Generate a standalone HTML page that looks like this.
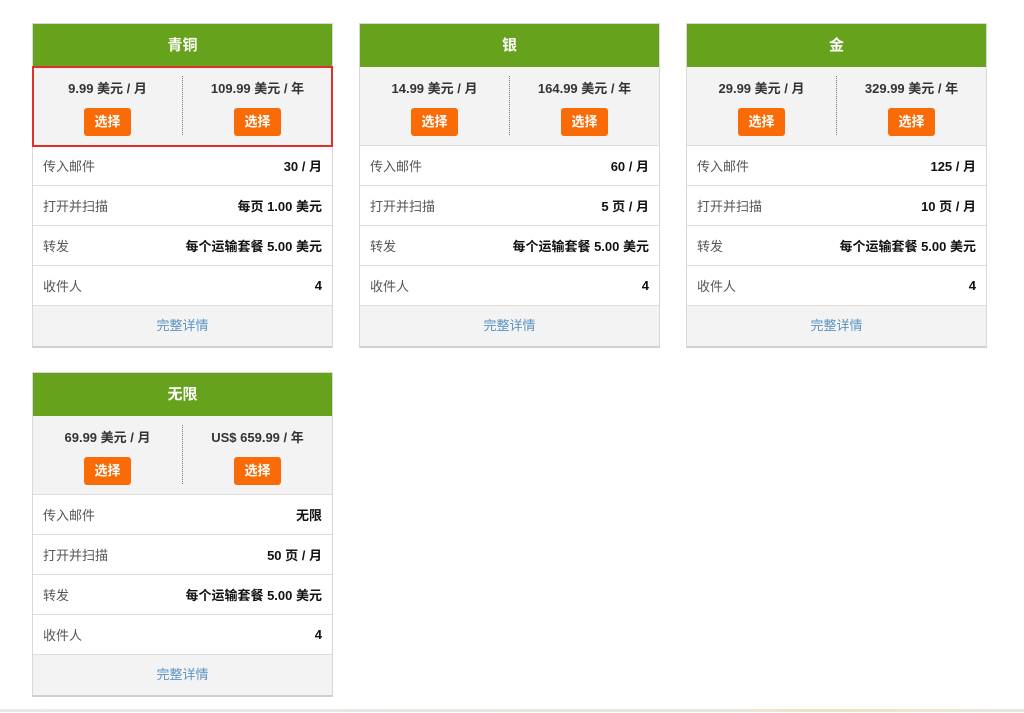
<!DOCTYPE html>
<html><head><meta charset="utf-8"><style>
*{box-sizing:border-box;margin:0;padding:0}
body{width:1024px;height:713px;background:#fff;font-family:"Liberation Sans","Noto Sans CJK SC",sans-serif;position:relative;overflow:hidden}
.card{position:absolute;width:301px;border:1px solid #d8d8d8;border-bottom:2px solid #d0d0d0;background:#fff}
.hd{height:43px;background:#67a21c;color:#fff;font-weight:bold;font-size:15px;text-align:center;line-height:43px}
.pr{height:79px;background:#f3f3f3;display:flex;position:relative;border-bottom:1px solid #ddd}
.pr.sel{outline:2px solid #e0302a;outline-offset:-1px}
.pc{flex:1;text-align:center;padding-top:11px;font-size:13px;font-weight:bold;color:#333}
.pc:first-child{border-right:1px dotted #777;margin:9px 0 10px;padding-top:2px}
.pc:last-child{margin:9px 0 10px;padding-top:2px}
.btn{display:inline-block;margin-top:11px;width:47px;height:28px;line-height:28px;background:#f96b06;color:#fff;border-radius:3px;font-size:13px;font-weight:bold}
.row{height:40px;border-bottom:1px solid #ddd;display:flex;justify-content:space-between;align-items:center;padding:0 10px;font-size:13px;color:#555}
.row b{color:#111;font-size:13px}
.ft{height:40px;background:#f3f3f3;text-align:center;line-height:40px;color:#5b93c2;font-size:13px}
.line{position:absolute;left:0;top:709px;width:1024px;height:3px;background:linear-gradient(90deg,#e6ebe6,#e8e6dc 70%,#efe2c0 80%,#e8e6dc)}
</style></head><body>
<div class="card" style="left:32px;top:23px">
<div class="hd">青铜</div>
<div class="pr sel"><div class="pc">9.99 美元 / 月<br><span class="btn">选择</span></div><div class="pc">109.99 美元 / 年<br><span class="btn">选择</span></div></div>
<div class="row">传入邮件<b>30 / 月</b></div><div class="row">打开并扫描<b>每页 1.00 美元</b></div><div class="row">转发<b>每个运输套餐 5.00 美元</b></div><div class="row">收件人<b>4</b></div>
<div class="ft">完整详情</div></div>
<div class="card" style="left:359px;top:23px">
<div class="hd">银</div>
<div class="pr"><div class="pc">14.99 美元 / 月<br><span class="btn">选择</span></div><div class="pc">164.99 美元 / 年<br><span class="btn">选择</span></div></div>
<div class="row">传入邮件<b>60 / 月</b></div><div class="row">打开并扫描<b>5 页 / 月</b></div><div class="row">转发<b>每个运输套餐 5.00 美元</b></div><div class="row">收件人<b>4</b></div>
<div class="ft">完整详情</div></div>
<div class="card" style="left:686px;top:23px">
<div class="hd">金</div>
<div class="pr"><div class="pc">29.99 美元 / 月<br><span class="btn">选择</span></div><div class="pc">329.99 美元 / 年<br><span class="btn">选择</span></div></div>
<div class="row">传入邮件<b>125 / 月</b></div><div class="row">打开并扫描<b>10 页 / 月</b></div><div class="row">转发<b>每个运输套餐 5.00 美元</b></div><div class="row">收件人<b>4</b></div>
<div class="ft">完整详情</div></div>
<div class="card" style="left:32px;top:372px">
<div class="hd">无限</div>
<div class="pr"><div class="pc">69.99 美元 / 月<br><span class="btn">选择</span></div><div class="pc">US$ 659.99 / 年<br><span class="btn">选择</span></div></div>
<div class="row">传入邮件<b>无限</b></div><div class="row">打开并扫描<b>50 页 / 月</b></div><div class="row">转发<b>每个运输套餐 5.00 美元</b></div><div class="row">收件人<b>4</b></div>
<div class="ft">完整详情</div></div>
<div class="line"></div>
</body></html>
